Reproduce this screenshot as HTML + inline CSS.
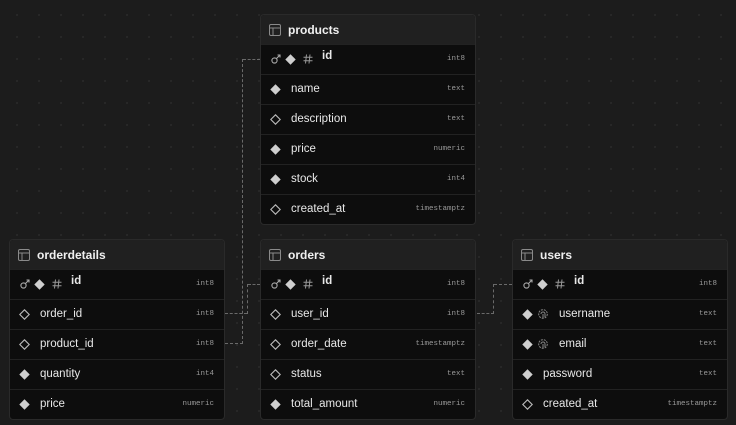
<!DOCTYPE html>
<html><head><meta charset="utf-8"><style>
*{margin:0;padding:0;box-sizing:border-box}
body{width:736px;height:425px;overflow:hidden;background:#1c1c1c;background-image:radial-gradient(#2a2a2a 0.9px,transparent 1.1px);background-size:22px 22px;background-position:6px 4px;font-family:"Liberation Sans",sans-serif;position:relative}
.t{position:absolute;width:216px;border:1px solid #2a2a2a;border-radius:4px;overflow:hidden;background:#0d0d0d}
.h{height:29px;background:#202020;color:#f0f0f0;font-size:12px;font-weight:bold;display:flex;align-items:center;padding-left:8px;gap:7px}
.r{height:30px;border-top:1px solid #222;position:relative;color:#e8e8e8;font-size:11.5px}
.r .n{position:absolute;left:30px;top:8px}
.r.pk .n{left:61px;top:5px;font-weight:bold}
.r.u .n{left:46px}
.ty{position:absolute;right:10px;top:10px;font-family:"Liberation Mono",monospace;font-size:7.5px;color:#9a9a9a}
.ic{position:absolute;top:9px}
.ln{position:absolute;border-color:#6a6a6a;border-style:dashed;border-width:0}
</style></head><body>
<svg width="0" height="0" style="position:absolute"><defs>
<g id="tb"><rect x="0.5" y="0.5" width="11" height="11" rx="1.5" fill="none" stroke="#8a8a8a"/><path d="M0.5 4h11M4 4v7.5" stroke="#8a8a8a"/></g>
<g id="fd"><path d="M5.5 0.3L10.7 5.5 5.5 10.7 0.3 5.5Z" fill="#cfcfcf"/></g>
<g id="od"><path d="M5.5 0.8L10.2 5.5 5.5 10.2 0.8 5.5Z" fill="none" stroke="#bbb" stroke-width="1.1"/></g>
<g id="key"><circle cx="3.5" cy="6.5" r="2.6" fill="none" stroke="#aaa" stroke-width="1.1"/><path d="M5.5 4.5L9 1M6.5 1H9V3.5" fill="none" stroke="#aaa" stroke-width="1.1"/></g>
<g id="hs"><path d="M3.5 0.5L2.5 9.5M7 0.5L6 9.5M0.5 3.2H9.5M0.5 6.8H9.5" stroke="#999" stroke-width="1"/></g>
<g id="fp"><circle cx="5" cy="5" r="4.3" fill="none" stroke="#888" stroke-width="1" stroke-dasharray="2 1"/><path d="M3 5a2 2 0 0 1 4 0v3M5 5v4" stroke="#888" fill="none"/></g>
</defs></svg>

<div class="ln" style="left:243px;top:59px;width:17px;border-top-width:1px"></div>
<div class="ln" style="left:242px;top:59px;height:285px;border-left-width:1px"></div>
<div class="ln" style="left:225px;top:343px;width:18px;border-top-width:1px"></div>
<div class="ln" style="left:248px;top:284px;width:12px;border-top-width:1px"></div>
<div class="ln" style="left:247px;top:284px;height:30px;border-left-width:1px"></div>
<div class="ln" style="left:225px;top:313px;width:22px;border-top-width:1px"></div>
<div class="ln" style="left:494px;top:284px;width:18px;border-top-width:1px"></div>
<div class="ln" style="left:493px;top:284px;height:30px;border-left-width:1px"></div>
<div class="ln" style="left:477px;top:313px;width:17px;border-top-width:1px"></div>

<div class="t" style="left:260px;top:14px">
<div class="h"><svg width="12" height="12"><use href="#tb"/></svg>products</div>
<div class="r pk"><svg class="ic" style="left:10px" width="11" height="11"><use href="#key"/></svg><svg class="ic" style="left:24px" width="11" height="11"><use href="#fd"/></svg><svg class="ic" style="left:42px" width="11" height="11"><use href="#hs"/></svg><span class="n">id</span><span class="ty">int8</span></div>
<div class="r"><svg class="ic" style="left:9px" width="11" height="11"><use href="#fd"/></svg><span class="n">name</span><span class="ty">text</span></div>
<div class="r"><svg class="ic" style="left:9px" width="11" height="11"><use href="#od"/></svg><span class="n">description</span><span class="ty">text</span></div>
<div class="r"><svg class="ic" style="left:9px" width="11" height="11"><use href="#fd"/></svg><span class="n">price</span><span class="ty">numeric</span></div>
<div class="r"><svg class="ic" style="left:9px" width="11" height="11"><use href="#fd"/></svg><span class="n">stock</span><span class="ty">int4</span></div>
<div class="r"><svg class="ic" style="left:9px" width="11" height="11"><use href="#od"/></svg><span class="n">created_at</span><span class="ty">timestamptz</span></div>
</div>

<div class="t" style="left:9px;top:239px">
<div class="h"><svg width="12" height="12"><use href="#tb"/></svg>orderdetails</div>
<div class="r pk"><svg class="ic" style="left:10px" width="11" height="11"><use href="#key"/></svg><svg class="ic" style="left:24px" width="11" height="11"><use href="#fd"/></svg><svg class="ic" style="left:42px" width="11" height="11"><use href="#hs"/></svg><span class="n">id</span><span class="ty">int8</span></div>
<div class="r"><svg class="ic" style="left:9px" width="11" height="11"><use href="#od"/></svg><span class="n">order_id</span><span class="ty">int8</span></div>
<div class="r"><svg class="ic" style="left:9px" width="11" height="11"><use href="#od"/></svg><span class="n">product_id</span><span class="ty">int8</span></div>
<div class="r"><svg class="ic" style="left:9px" width="11" height="11"><use href="#fd"/></svg><span class="n">quantity</span><span class="ty">int4</span></div>
<div class="r"><svg class="ic" style="left:9px" width="11" height="11"><use href="#fd"/></svg><span class="n">price</span><span class="ty">numeric</span></div>
</div>

<div class="t" style="left:260px;top:239px">
<div class="h"><svg width="12" height="12"><use href="#tb"/></svg>orders</div>
<div class="r pk"><svg class="ic" style="left:10px" width="11" height="11"><use href="#key"/></svg><svg class="ic" style="left:24px" width="11" height="11"><use href="#fd"/></svg><svg class="ic" style="left:42px" width="11" height="11"><use href="#hs"/></svg><span class="n">id</span><span class="ty">int8</span></div>
<div class="r"><svg class="ic" style="left:9px" width="11" height="11"><use href="#od"/></svg><span class="n">user_id</span><span class="ty">int8</span></div>
<div class="r"><svg class="ic" style="left:9px" width="11" height="11"><use href="#od"/></svg><span class="n">order_date</span><span class="ty">timestamptz</span></div>
<div class="r"><svg class="ic" style="left:9px" width="11" height="11"><use href="#od"/></svg><span class="n">status</span><span class="ty">text</span></div>
<div class="r"><svg class="ic" style="left:9px" width="11" height="11"><use href="#fd"/></svg><span class="n">total_amount</span><span class="ty">numeric</span></div>
</div>

<div class="t" style="left:512px;top:239px">
<div class="h"><svg width="12" height="12"><use href="#tb"/></svg>users</div>
<div class="r pk"><svg class="ic" style="left:10px" width="11" height="11"><use href="#key"/></svg><svg class="ic" style="left:24px" width="11" height="11"><use href="#fd"/></svg><svg class="ic" style="left:42px" width="11" height="11"><use href="#hs"/></svg><span class="n">id</span><span class="ty">int8</span></div>
<div class="r u"><svg class="ic" style="left:9px" width="11" height="11"><use href="#fd"/></svg><svg class="ic" style="left:25px" width="11" height="11"><use href="#fp"/></svg><span class="n">username</span><span class="ty">text</span></div>
<div class="r u"><svg class="ic" style="left:9px" width="11" height="11"><use href="#fd"/></svg><svg class="ic" style="left:25px" width="11" height="11"><use href="#fp"/></svg><span class="n">email</span><span class="ty">text</span></div>
<div class="r"><svg class="ic" style="left:9px" width="11" height="11"><use href="#fd"/></svg><span class="n">password</span><span class="ty">text</span></div>
<div class="r"><svg class="ic" style="left:9px" width="11" height="11"><use href="#od"/></svg><span class="n">created_at</span><span class="ty">timestamptz</span></div>
</div>
</body></html>
